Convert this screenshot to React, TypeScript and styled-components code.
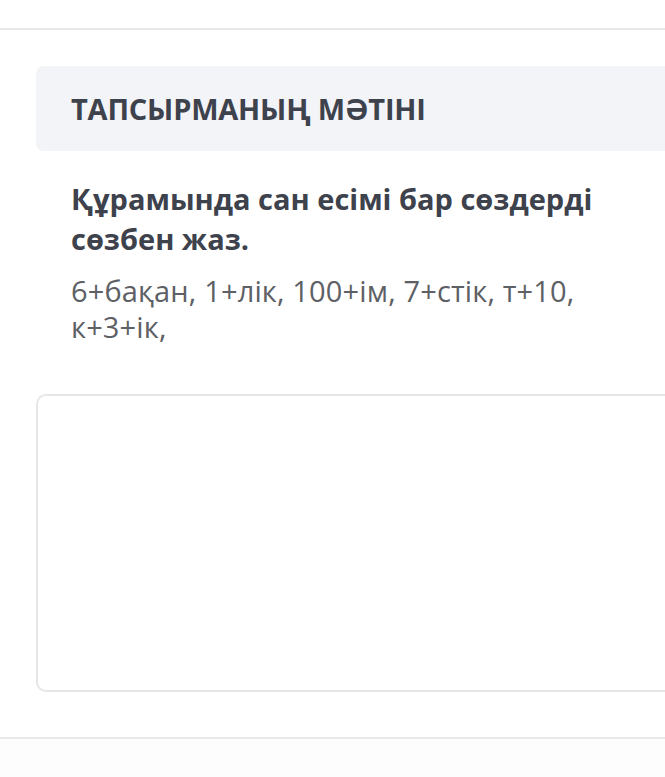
import styled, { createGlobalStyle } from "styled-components";

const GlobalStyle = createGlobalStyle`
    html, body {
        margin: 0;
        padding: 0;
        background: #ffffff;
    }
    body {
        font-family: "Open Sans", "Noto Sans", sans-serif;
        overflow: hidden;
    }
`;

const Page = styled.div`
    width: 665px;
    height: 777px;
    display: flex;
    flex-direction: column;
`;

const TopBar = styled.div`
    height: 28px;
    border-bottom: 2px solid #e8e8e8;
    flex-shrink: 0;
`;

const Task = styled.section`
    display: flex;
    flex-direction: column;
    padding: 36px 0 0 36px;
    border-bottom: 2px solid #e8e8e8;
`;

const TaskHeader = styled.div`
    height: 85px;
    margin-right: -12px;
    display: flex;
    align-items: center;
    padding-left: 35px;
    background: #f3f4f8;
    border-radius: 8px 0 0 8px;

    h2 {
        margin: 0;
        font-size: 29px;
        font-weight: 700;
        color: #3d424c;
        letter-spacing: -0.2px;
    }
`;

const TaskBody = styled.div`
    padding: 28px 40px 0 35px;

    h3 {
        margin: 0 0 14px;
        font-size: 29px;
        font-weight: 700;
        line-height: 40px;
        color: #3d424c;
    }

    p {
        margin: 0;
        font-size: 29px;
        font-weight: 400;
        line-height: 36px;
        color: #5d6065;
        letter-spacing: 0.15px;
    }
`;

const AnswerBox = styled.div`
    height: 294px;
    margin: 49px -12px 45px 0;
    border: 2px solid #e6e6e6;
    border-right: none;
    border-radius: 10px 0 0 10px;
`;

const Footer = styled.div`
    flex: 1;
    background: #fdfdfd;
`;

const App = () => {
    return (
        <Page>
            <GlobalStyle />
            <TopBar />
            <Task>
                <TaskHeader>
                    <h2>ТАПСЫРМАНЫҢ МӘТІНІ</h2>
                </TaskHeader>
                <TaskBody>
                    <h3>Құрамында сан есімі бар сөздерді сөзбен жаз.</h3>
                    <p>6+бақан, 1+лік, 100+ім, 7+стік, т+10, к+3+ік,</p>
                </TaskBody>
                <AnswerBox />
            </Task>
            <Footer />
        </Page>
    );
};

export default App;
